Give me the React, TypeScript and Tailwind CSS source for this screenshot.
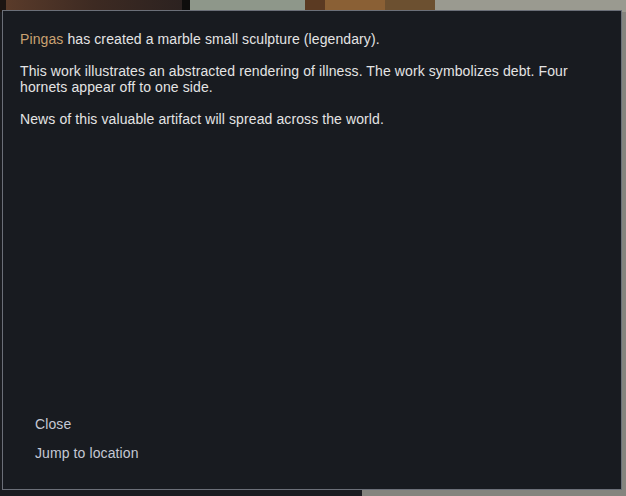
import React from 'react';

const Backdrop = () => (
  <div className="absolute inset-0 flex flex-col">
    <div className="flex h-[12px]">
      <div className="w-[6px] bg-[#1c1512]" />
      <div className="w-[176px] bg-gradient-to-r from-[#5a3b2a] via-[#3d2a22] to-[#2c2220]" />
      <div className="w-[8px] bg-[#0e0d0c]" />
      <div className="w-[115px] bg-[#8e978a]" />
      <div className="w-[20px] bg-[#5b3a22]" />
      <div className="w-[60px] bg-[#8a6035]" />
      <div className="w-[50px] bg-[#6c5030]" />
      <div className="flex-1 bg-[#9a9a90]" />
    </div>
    <div className="flex flex-1">
      <div className="w-[362px] bg-[#1a1c20]" />
      <div className="flex-1 bg-[#84847e]" />
    </div>
  </div>
);

const App = () => {
  return (
    <div className="relative h-[496px] w-[626px] overflow-hidden bg-[#1a1c20] font-['Liberation_Sans',Arial,sans-serif]">
      <Backdrop />
      <div className="absolute left-[2px] top-[10px] flex h-[480px] w-[620px] flex-col justify-between border border-[#6b6f78] bg-[#181b20] pb-[28px] pl-[17px] pr-[30px] pt-[20px] text-[14px] leading-[16px] tracking-[0.1px] text-[#e4e4e4]">
        <div className="flex flex-col gap-[16px]">
          <p>
            <span className="text-[#caa272]">Pingas</span> has created a marble small sculpture (legendary).
          </p>
          <p>
            This work illustrates an abstracted rendering of illness. The work symbolizes debt. Four hornets appear off to one side.
          </p>
          <p>News of this valuable artifact will spread across the world.</p>
        </div>
        <div className="flex flex-col items-start gap-[13px] pl-[15px] text-[#c4c8d4]">
          <button className="leading-[16px] tracking-[0.1px]">Close</button>
          <button className="leading-[16px] tracking-[0.1px]">Jump to location</button>
        </div>
      </div>
    </div>
  );
};

export default App;
